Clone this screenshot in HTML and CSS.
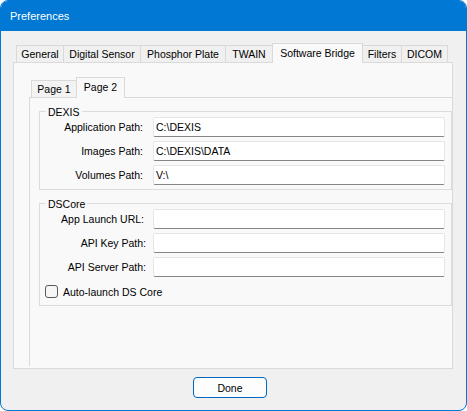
FILE: index.html
```html
<!DOCTYPE html>
<html>
<head>
<meta charset="utf-8">
<link rel="stylesheet" href="styles.css">
</head>
<body>
<div class="window">
  <div class="titlebar">Preferences</div>
  <div class="content">
    <div class="tabstrip">
      <div class="tab w-general">General</div>
      <div class="tab w-digital">Digital Sensor</div>
      <div class="tab w-phosphor">Phosphor Plate</div>
      <div class="tab w-twain">TWAIN</div>
      <div class="tab w-bridge active">Software Bridge</div>
      <div class="tab w-filters">Filters</div>
      <div class="tab w-dicom">DICOM</div>
    </div>
    <div class="panel">
      <div class="tabstrip substrip">
        <div class="tab w-page1">Page 1</div>
        <div class="tab w-page2 active">Page 2</div>
      </div>
      <div class="subpanel">
        <div class="group">
          <span class="group-title">DEXIS</span>
          <div class="row"><label>Application Path:</label><input class="field" type="text" value="C:\DEXIS"></div>
          <div class="row"><label>Images Path:</label><input class="field" type="text" value="C:\DEXIS\DATA"></div>
          <div class="row"><label>Volumes Path:</label><input class="field" type="text" value="V:\"></div>
        </div>
        <div class="group group-ds">
          <span class="group-title">DSCore</span>
          <div class="row"><label class="lbl-url">App Launch URL:</label><input class="field" type="text" value=""></div>
          <div class="row"><label>API Key Path:</label><input class="field" type="text" value=""></div>
          <div class="row"><label>API Server Path:</label><input class="field" type="text" value=""></div>
          <div class="check"><span class="box"></span><span>Auto-launch DS Core</span></div>
        </div>
      </div>
    </div>
    <div class="footer">
      <button class="btn">Done</button>
    </div>
  </div>
</div>
</body>
</html>
```
FILE: styles.css
```css
* { box-sizing: border-box; }
html, body { margin: 0; padding: 0; background: #ffffff; }
body {
  font-family: "Liberation Sans", Arial, sans-serif;
  font-size: 10.5px;
  color: #000;
}
.window {
  width: 467px;
  height: 411px;
  border: 1px solid #0078d4;
  border-radius: 8px;
  overflow: hidden;
  background: #f0f0f0;
  display: flex;
  flex-direction: column;
}
.titlebar {
  height: 30px;
  flex: none;
  background: #0078d4;
  color: #fff;
  font-size: 11px;
  line-height: 30px;
  padding-left: 9px;
}
.content {
  flex: 1;
  display: flex;
  flex-direction: column;
  padding: 12px 13px 0 12px;
  min-height: 0;
}
.tabstrip {
  display: flex;
  align-items: flex-end;
  height: 19px;
  flex: none;
  padding-left: 3px;
}
.tab {
  height: 17px;
  border: 1px solid #d9d9d9;
  border-bottom: none;
  margin-right: -1px;
  text-align: center;
  line-height: 16px;
  background: #f0f0f0;
  white-space: nowrap;
  flex: none;
}
.tab.active {
  height: 20px;
  margin-bottom: -1px;
  padding-top: 1px;
  background: #f9f9f9;
  position: relative;
  z-index: 1;
}
.w-general { width: 48px; }
.w-digital { width: 78px; }
.w-phosphor { width: 86px; }
.w-twain { width: 48px; }
.w-bridge { width: 91px; }
.w-filters { width: 40px; }
.w-dicom { width: 47px; }
.w-page1 { width: 46px; }
.w-page2 { width: 49px; }

.panel {
  flex: 1;
  border: 1px solid #dadada;
  background: #f9f9f9;
  padding: 14px 0 2px 15px;
  display: flex;
  flex-direction: column;
}
.substrip {
  height: 20px;
  padding-left: 2px;
}
.substrip .tab { background: #f3f3f3; }
.substrip .tab.active { height: 21px; background: #f9f9f9; }
.subpanel {
  flex: 1;
  border-top: 1px solid #dadada;
  border-left: 1px solid #dadada;
  padding: 13px 0 0 9px;
}
.group {
  position: relative;
  border: 1px solid #dcdcdc;
  padding: 5px 6px 4px 0;
  display: flex;
  flex-direction: column;
  gap: 4px;
}
.group + .group { margin-top: 13px; }
.group-ds { padding-bottom: 7px; }
.group-title {
  position: absolute;
  top: -7px;
  left: 6px;
  padding: 0 2px;
  background: #f9f9f9;
  line-height: 14px;
}
.row {
  display: flex;
  align-items: center;
  height: 20px;
}
.row label {
  width: 103px;
  margin-right: 10px;
  text-align: right;
  flex: none;
  white-space: nowrap;
}
.group-ds .row label {
  width: 106px;
  margin-right: 7px;
}
.group-ds .row .lbl-url {
  width: 104px;
  margin-right: 9px;
}
.field {
  flex: 1;
  min-width: 0;
  height: 20px;
  margin: 0;
  padding: 0 2px;
  border: 1px solid #e6e6e6;
  border-bottom-color: #868686;
  border-radius: 2px;
  background: #fff;
  font: inherit;
  color: #000;
  outline: none;
}
.check {
  display: flex;
  align-items: center;
  height: 13px;
  margin-top: 4px;
  padding-left: 5px;
}
.box {
  width: 13px;
  height: 13px;
  border: 1px solid #5a5a5a;
  border-radius: 3px;
  background: #f6f6f6;
  margin-right: 5px;
  flex: none;
}
.footer {
  height: 41px;
  flex: none;
  display: flex;
  justify-content: center;
  align-items: flex-start;
  padding: 8px 6px 0 0;
}
.btn {
  width: 74px;
  height: 21px;
  margin: 0;
  padding: 0;
  border: 1px solid #0067c0;
  border-radius: 4px;
  background: #fdfdfd;
  font: inherit;
  color: #000;
}
```
